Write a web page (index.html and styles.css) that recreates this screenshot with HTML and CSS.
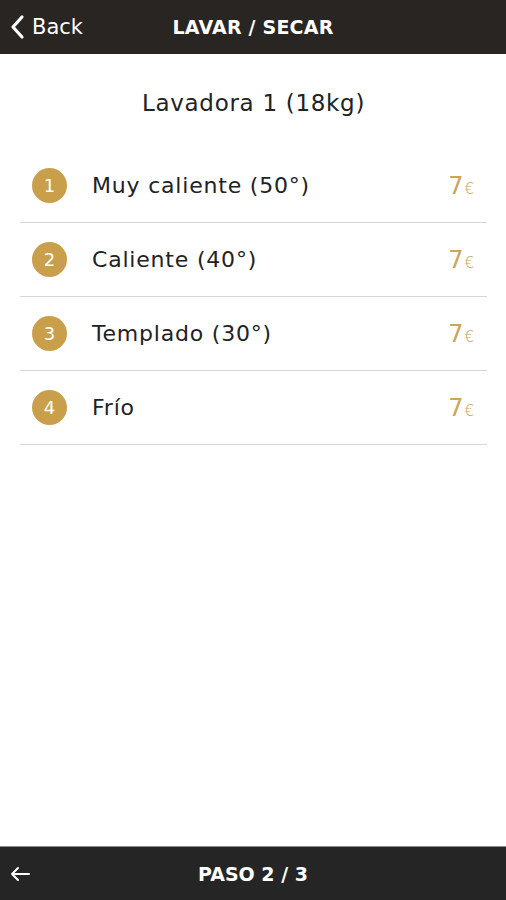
FILE: index.html
```html
<!DOCTYPE html>
<html lang="es">
<head>
    <meta charset="UTF-8">
    <meta name="viewport" content="width=device-width, initial-scale=1.0">
    <title>Lavar / Secar</title>
    <link rel="stylesheet" href="styles.css">
</head>
<body>
    <div class="app">
        <header class="topbar">
            <a class="back" href="#">
                <svg class="back-icon" width="16" height="26" viewBox="0 0 16 26">
                    <path d="M13 3 L4 13 L13 23" fill="none" stroke="#fff" stroke-width="3.2" stroke-linecap="round" stroke-linejoin="round"/>
                </svg>
                <span>Back</span>
            </a>
            <h1 class="title">LAVAR / SECAR</h1>
        </header>

        <main class="content">
            <h2 class="machine">Lavadora 1 (18kg)</h2>

            <ul class="programs">
                <li class="program">
                    <span class="num">1</span>
                    <span class="name">Muy caliente (50°)</span>
                    <span class="price">7<small>€</small></span>
                </li>
                <li class="program">
                    <span class="num">2</span>
                    <span class="name">Caliente (40°)</span>
                    <span class="price">7<small>€</small></span>
                </li>
                <li class="program">
                    <span class="num">3</span>
                    <span class="name">Templado (30°)</span>
                    <span class="price">7<small>€</small></span>
                </li>
                <li class="program">
                    <span class="num">4</span>
                    <span class="name">Frío</span>
                    <span class="price">7<small>€</small></span>
                </li>
            </ul>
        </main>

        <footer class="stepbar">
            <svg class="prev" width="22" height="16" viewBox="0 0 22 16">
                <path d="M20 8 H3 M9 2 L3 8 L9 14" fill="none" stroke="#fff" stroke-width="2" stroke-linecap="round" stroke-linejoin="round"/>
            </svg>
            <span class="step">PASO 2 / 3</span>
        </footer>
    </div>
</body>
</html>
```

FILE: styles.css
```css
/* base */
body {
    margin: 0;
    padding: 0;
    background-color: #ffffff;
    font-family: "DejaVu Sans", "Noto Sans", sans-serif;
    color: #222;
}
.app {
    height: 900px;
    display: flex;
    flex-direction: column;
}

/* cabecera */
.topbar {
    height: 54px;
    background-color: #282523;
    display: flex;
    align-items: center;
    position: relative;
    flex-shrink: 0;
}
.back {
    display: flex;
    align-items: center;
    gap: 7px;
    padding-left: 9px;
    color: #fff;
    text-decoration: none;
    font-size: 21px;
    z-index: 1;
}
.back-icon {
    display: block;
}
.title {
    position: absolute;
    left: 0;
    right: 0;
    margin: 0;
    text-align: center;
    color: #fff;
    font-size: 19px;
    font-weight: bold;
    letter-spacing: 0.2px;
}

/* contenido */
.content {
    flex: 1;
    padding: 0 19px 0 20px;
}
.machine {
    margin: 33px 0 0;
    text-align: center;
    font-size: 23px;
    font-weight: normal;
    color: #222;
    line-height: 32px;
    letter-spacing: 0.7px;
}
.programs {
    list-style: none;
    margin: 30px 0 0;
    padding: 0;
}
.program {
    height: 73px;
    border-bottom: 1px solid #d6d6d6;
    display: flex;
    align-items: center;
    padding-left: 12px;
    padding-right: 13px;
}
.num {
    width: 35px;
    height: 35px;
    border-radius: 50%;
    background-color: #c99f4c;
    color: #fff;
    font-size: 18px;
    display: flex;
    align-items: center;
    justify-content: center;
    flex-shrink: 0;
}
.name {
    flex: 1;
    margin-left: 25px;
    font-size: 22px;
    letter-spacing: 0.8px;
    color: #222;
}
.price {
    color: #cda558;
    font-size: 24px;
}
.price small {
    font-size: 15px;
    margin-left: 1px;
    font-weight: 200;
}

/* pie */
.stepbar {
    height: 53px;
    background-color: #252525;
    border-top: 1px solid #8a8a8a;
    display: flex;
    align-items: center;
    position: relative;
    flex-shrink: 0;
}
.prev {
    display: block;
    margin-left: 9px;
    z-index: 1;
}
.step {
    position: absolute;
    left: 0;
    right: 0;
    text-align: center;
    color: #fff;
    font-size: 19px;
    font-weight: bold;
    letter-spacing: 0px;
}
```
